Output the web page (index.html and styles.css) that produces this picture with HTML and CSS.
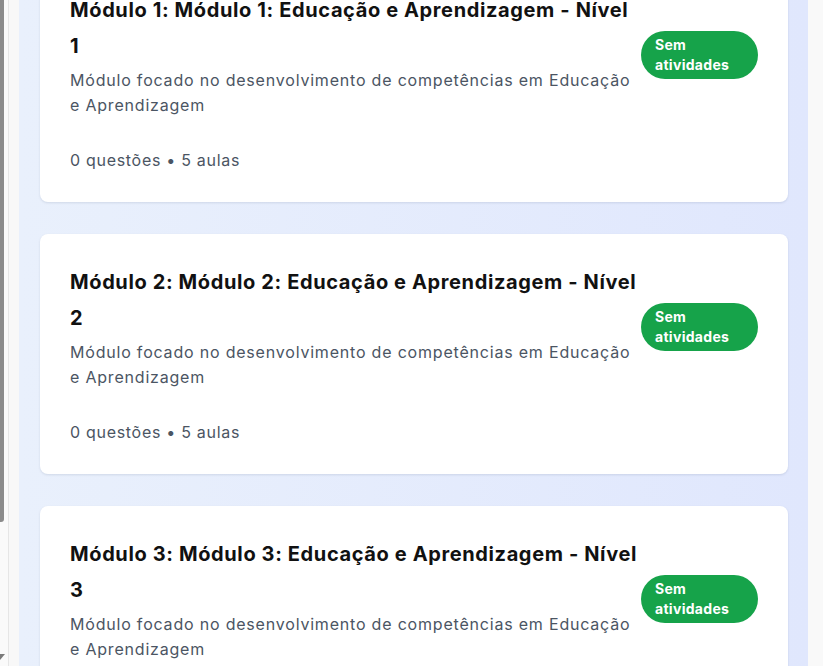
FILE: index.html
```html
<!DOCTYPE html>
<html lang="pt">
<head>
<meta charset="utf-8">
<link rel="stylesheet" href="styles.css">
</head>
<body>
<div class="page">
  <div class="left-strip">
    <div class="scroll-thumb"></div>
    <div class="scroll-arrow"></div>
    <div class="strip-pane"></div>
  </div>
  <main class="main">
    <div class="list">
      <div class="card">
        <div class="card-row">
          <div class="card-text">
            <h2 class="title">Módulo 1: Módulo 1: Educação e Aprendizagem - Nível 1</h2>
            <p class="desc">Módulo focado no desenvolvimento de competências em Educação e Aprendizagem</p>
          </div>
          <span class="badge">Sem atividades</span>
        </div>
        <p class="meta">0 questões • 5 aulas</p>
      </div>
      <div class="card">
        <div class="card-row">
          <div class="card-text">
            <h2 class="title">Módulo 2: Módulo 2: Educação e Aprendizagem - Nível 2</h2>
            <p class="desc">Módulo focado no desenvolvimento de competências em Educação e Aprendizagem</p>
          </div>
          <span class="badge">Sem atividades</span>
        </div>
        <p class="meta">0 questões • 5 aulas</p>
      </div>
      <div class="card">
        <div class="card-row">
          <div class="card-text">
            <h2 class="title">Módulo 3: Módulo 3: Educação e Aprendizagem - Nível 3</h2>
            <p class="desc">Módulo focado no desenvolvimento de competências em Educação e Aprendizagem</p>
          </div>
          <span class="badge">Sem atividades</span>
        </div>
        <p class="meta">0 questões • 5 aulas</p>
      </div>
    </div>
  </main>
  <div class="right-strip"></div>
</div>
</body>
</html>
```

FILE: styles.css
```css
* { box-sizing: border-box; }
html, body {
  margin: 0;
  padding: 0;
  height: 666px;
  overflow: hidden;
  background: #fafafa;
  font-family: Inter, "Noto Sans", sans-serif;
}
.page {
  display: flex;
  height: 666px;
}
.left-strip {
  position: relative;
  width: 19px;
  flex-shrink: 0;
  background: #fafafa;
}
.strip-pane {
  position: absolute;
  left: 8px;
  top: 0;
  bottom: 0;
  width: 11px;
  border-left: 1px solid #e6e6e6;
  background: #f8f8f8;
}
.scroll-thumb {
  position: absolute;
  left: 0;
  top: 0;
  width: 4px;
  height: 522px;
  background: #8b8b8b;
  border-bottom-right-radius: 3px;
}
.scroll-arrow {
  position: absolute;
  left: 0;
  top: 654px;
  width: 0;
  height: 0;
  border-right: 5px solid transparent;
  border-top: 6px solid #7a7a7a;
}
.main {
  width: 789px;
  flex-shrink: 0;
  background: linear-gradient(to right, #e9f0fc, #e0e7fd);
  padding: 0 20px 0 21px;
}
.list {
  display: flex;
  flex-direction: column;
  gap: 32px;
  margin-top: -38px;
}
.card {
  background: #ffffff;
  border-radius: 8px;
  padding: 30px;
  box-shadow: 0 1px 3px rgba(30, 40, 80, 0.08), 0 1px 2px rgba(30, 40, 80, 0.04);
}
.card-row {
  display: flex;
  align-items: center;
  gap: 0;
}
.card-text {
  flex: 1;
  min-width: 0;
}
.title {
  margin: 0;
  font-size: 20px;
  line-height: 36px;
  font-weight: 700;
  letter-spacing: 0.62px;
  color: #111111;
}
.desc {
  margin: 4px 0 0;
  font-size: 16px;
  line-height: 25px;
  letter-spacing: 0.8px;
  color: #4b5563;
}
.badge {
  flex-shrink: 0;
  width: 117px;
  padding: 4px 14px;
  border-radius: 24px;
  background: #16a34a;
  color: #ffffff;
  font-size: 14px;
  line-height: 20px;
  font-weight: 700;
  letter-spacing: 0.3px;
}
.meta {
  margin: 30px 0 0;
  font-size: 16px;
  line-height: 24px;
  letter-spacing: 0.7px;
  color: #4b5563;
}
.right-strip {
  flex: 1;
  background: #f9f9f9;
}
```
